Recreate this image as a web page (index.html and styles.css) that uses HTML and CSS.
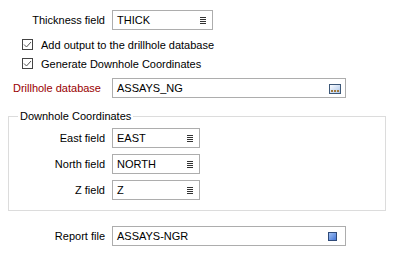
FILE: index.html
```html
<!DOCTYPE html>
<html>
<head>
<meta charset="utf-8">
<link rel="stylesheet" href="styles.css">
</head>
<body>
<div class="form">
  <div class="row">
    <span class="label">Thickness field</span>
    <div class="field w100"><span class="val">THICK</span>
      <svg class="menu" width="6" height="7" viewBox="0 0 6 7"><path d="M0 .5h6M0 2.5h6M0 4.5h6M0 6.5h6" stroke="#333" stroke-width="1"/></svg>
    </div>
  </div>
  <div class="check first">
    <svg class="cb" width="11" height="11" viewBox="0 0 11 11"><rect x=".5" y=".5" width="10" height="10" fill="#fff" stroke="#444"/><path d="M2 5.5l2.5 2.5 4.5-5" fill="none" stroke="#555" stroke-width="1"/></svg>
    <span>Add output to the drillhole database</span>
  </div>
  <div class="check">
    <svg class="cb" width="11" height="11" viewBox="0 0 11 11"><rect x=".5" y=".5" width="10" height="10" fill="#fff" stroke="#444"/><path d="M2 5.5l2.5 2.5 4.5-5" fill="none" stroke="#555" stroke-width="1"/></svg>
    <span>Generate Downhole Coordinates</span>
  </div>
  <div class="row db">
    <span class="label red">Drillhole database</span>
    <div class="field w234"><span class="val">ASSAYS_NG</span>
      <svg class="browse" width="12" height="10" viewBox="0 0 12 10">
        <defs><linearGradient id="g1" x1="0" y1="0" x2="1" y2="1"><stop offset="0" stop-color="#ffffff"/><stop offset="1" stop-color="#a9c4ea"/></linearGradient></defs>
        <rect x=".5" y=".5" width="11" height="9" fill="url(#g1)" stroke="#3d5878"/>
        <rect x="2" y="6" width="2" height="2" fill="#a0783a"/>
        <rect x="5" y="6" width="2" height="2" fill="#a0783a"/>
        <rect x="8" y="6" width="2" height="2" fill="#a0783a"/>
      </svg>
    </div>
  </div>
  <div class="group">
    <span class="title">Downhole Coordinates</span>
    <div class="row">
      <span class="label glabel">East field</span>
      <div class="field w88"><span class="val">EAST</span>
        <svg class="menu" width="6" height="7" viewBox="0 0 6 7"><path d="M0 .5h6M0 2.5h6M0 4.5h6M0 6.5h6" stroke="#333" stroke-width="1"/></svg>
      </div>
    </div>
    <div class="row">
      <span class="label glabel">North field</span>
      <div class="field w88"><span class="val">NORTH</span>
        <svg class="menu" width="6" height="7" viewBox="0 0 6 7"><path d="M0 .5h6M0 2.5h6M0 4.5h6M0 6.5h6" stroke="#333" stroke-width="1"/></svg>
      </div>
    </div>
    <div class="row">
      <span class="label glabel">Z field</span>
      <div class="field w88"><span class="val">Z</span>
        <svg class="menu" width="6" height="7" viewBox="0 0 6 7"><path d="M0 .5h6M0 2.5h6M0 4.5h6M0 6.5h6" stroke="#333" stroke-width="1"/></svg>
      </div>
    </div>
  </div>
  <div class="row report">
    <span class="label">Report file</span>
    <div class="field w234"><span class="val">ASSAYS-NGR</span>
      <svg class="file" width="9" height="9" viewBox="0 0 9 9">
        <defs><linearGradient id="g2" x1="0" y1="0" x2="1" y2="1"><stop offset="0" stop-color="#a8c6f4"/><stop offset="1" stop-color="#3f72d6"/></linearGradient></defs>
        <rect x=".5" y=".5" width="8" height="8" fill="url(#g2)" stroke="#2f4a78"/>
      </svg>
    </div>
  </div>
</div>
</body>
</html>
```
FILE: styles.css
```css
html, body {
  margin: 0;
  padding: 0;
  background: #fff;
}
body {
  font-family: "Liberation Sans", Arial, sans-serif;
  font-size: 11px;
  color: #000;
}
.form {
  padding-top: 10px;
  width: 394px;
}
.row {
  display: flex;
  align-items: center;
  height: 20px;
}
.label {
  width: 105px;
  text-align: right;
  margin-right: 7px;
  white-space: nowrap;
}
.label.red {
  color: #990000;
  width: 101px;
  margin-right: 11px;
}
.glabel {
  width: 96px;
}
.field {
  box-sizing: border-box;
  height: 20px;
  border: 1px solid #adadad;
  display: flex;
  align-items: center;
  padding-left: 4px;
  padding-right: 6px;
}
.val {
  flex: 1;
  white-space: nowrap;
}
.w100 { width: 101px; }
.w88 { width: 88px; }
.w234 { width: 234px; padding-right: 4px; }
.menu { display: block; }
.browse { display: block; margin-top: 1px; }
.file { display: block; margin-right: 4px; }
.check {
  display: flex;
  align-items: center;
  height: 19px;
  padding-left: 22px;
}
.check.first { margin-top: 5px; }
.cb {
  display: block;
  margin-right: 8px;
}
.db { margin-top: 5px; }
.group {
  position: relative;
  box-sizing: border-box;
  margin: 18px 0 0 8px;
  width: 378px;
  border: 1px solid #dcdcdc;
  padding: 11px 0 10px 0;
  display: flex;
  flex-direction: column;
  gap: 6px;
}
.title {
  position: absolute;
  left: 9px;
  top: -8px;
  background: #fff;
  padding: 0 2px;
  line-height: 14px;
}
.report { margin-top: 15px; }
```
